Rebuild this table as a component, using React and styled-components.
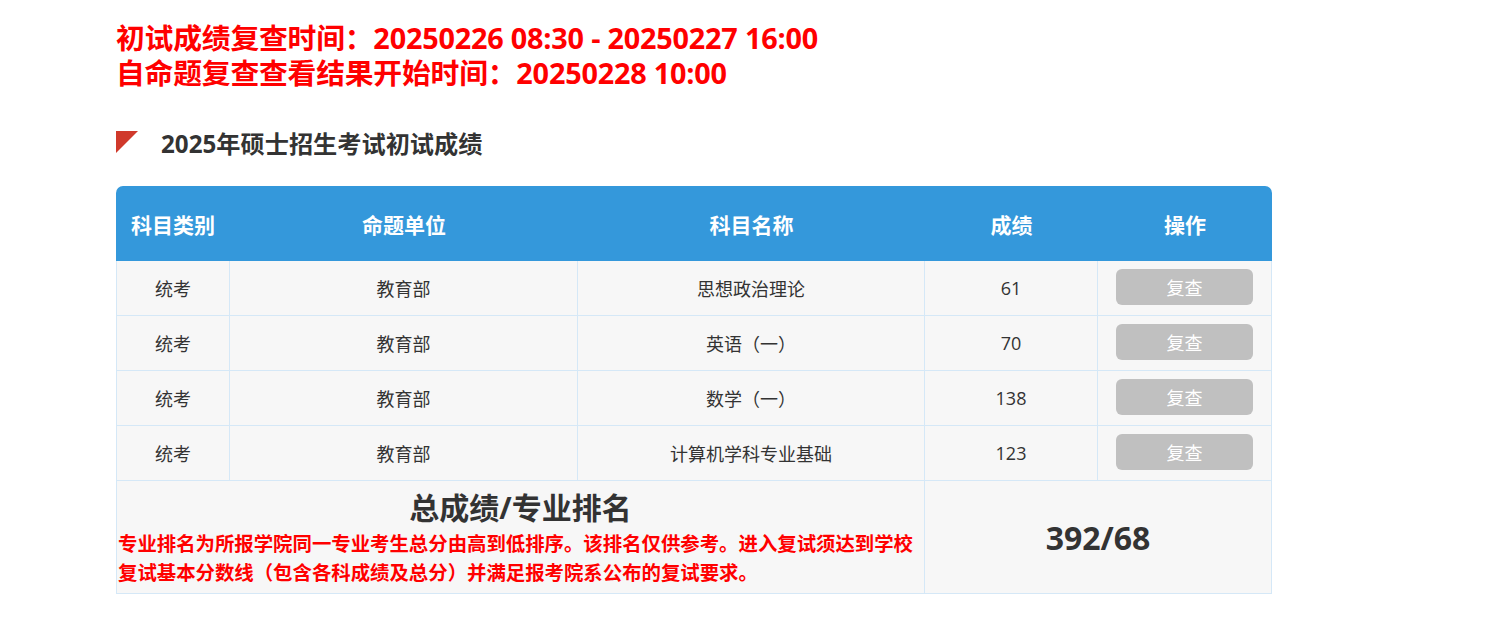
import React from "react";
import styled, { createGlobalStyle } from "styled-components";

const GlobalStyle = createGlobalStyle`
  html, body {
    margin: 0;
    padding: 0;
    background: #fff;
    font-family: "Open Sans", "Noto Sans CJK SC", sans-serif;
  }
`;

const Page = styled.div`
  width: 1156px;
  padding: 20px 0 0 116px;
`;

const Notice = styled.div`
  color: #f00;
  font-size: 28.8px;
  font-weight: 700;
  line-height: 35px;
  letter-spacing: -0.2px;
`;

const SectionTitle = styled.h2`
  display: flex;
  align-items: center;
  gap: 23px;
  margin: 38px 0 0;
  height: 28px;
  font-size: 24.2px;
  font-weight: 700;
  color: #333;
`;

const Flag = styled.span`
  width: 22px;
  height: 22px;
  background: #d0392b;
  clip-path: polygon(0 0, 100% 0, 0 100%);
`;

const Table = styled.table`
  margin-top: 30px;
  width: 1156px;
  border-collapse: separate;
  border-spacing: 0;
  table-layout: fixed;
  font-size: 18px;
  color: #333;
`;

const HeadCell = styled.th`
  height: 75px;
  padding: 0;
  background: #3498db;
  color: #fff;
  font-size: 21px;
  font-weight: 700;
  text-align: center;
  &:first-child { border-top-left-radius: 7px; }
  &:last-child { border-top-right-radius: 7px; }
`;

const Cell = styled.td`
  height: 54px;
  padding: 0;
  background: #f7f7f7;
  text-align: center;
  border-bottom: 1px solid #d5e8f7;
  border-left: ${(p) => (p.$first ? "1px solid #d5e8f7" : "none")};
  border-right: 1px solid #d5e8f7;
`;

const ReviewButton = styled.button`
  width: 137px;
  height: 36px;
  margin-top: -2px;
  border: none;
  border-radius: 6px;
  background: #c0c0c0;
  color: #fff;
  font-family: inherit;
  font-size: 18px;
  cursor: not-allowed;
`;

const SummaryCell = styled(Cell)`
  height: 112px;
  vertical-align: top;
  text-align: left;
`;

const TotalCell = styled(Cell)`
  height: 112px;
  font-size: 32px;
  font-weight: 700;
`;

const SummaryTitle = styled.div`
  margin-top: 6px;
  text-align: center;
  font-size: 30px;
  font-weight: 700;
  line-height: 42px;
`;

const SummaryNote = styled.div`
  padding-left: 1px;
  color: #f00;
  font-size: 19.4px;
  font-weight: 700;
  line-height: 29px;
`;

const rows = [
  { type: "统考", unit: "教育部", name: "思想政治理论", score: 61 },
  { type: "统考", unit: "教育部", name: "英语（一）", score: 70 },
  { type: "统考", unit: "教育部", name: "数学（一）", score: 138 },
  { type: "统考", unit: "教育部", name: "计算机学科专业基础", score: 123 },
];

export default function App() {
  return (
    <Page>
      <GlobalStyle />
      <Notice>
        初试成绩复查时间：20250226 08:30 - 20250227 16:00
        <br />
        自命题复查查看结果开始时间：20250228 10:00
      </Notice>
      <SectionTitle>
        <Flag />
        2025年硕士招生考试初试成绩
      </SectionTitle>
      <Table>
        <colgroup>
          <col style={{ width: 114 }} />
          <col style={{ width: 348 }} />
          <col style={{ width: 347 }} />
          <col style={{ width: 173 }} />
          <col style={{ width: 174 }} />
        </colgroup>
        <thead>
          <tr>
            <HeadCell>科目类别</HeadCell>
            <HeadCell>命题单位</HeadCell>
            <HeadCell>科目名称</HeadCell>
            <HeadCell>成绩</HeadCell>
            <HeadCell>操作</HeadCell>
          </tr>
        </thead>
        <tbody>
          {rows.map((r) => (
            <tr key={r.name}>
              <Cell $first>{r.type}</Cell>
              <Cell>{r.unit}</Cell>
              <Cell>{r.name}</Cell>
              <Cell>{r.score}</Cell>
              <Cell>
                <ReviewButton disabled>复查</ReviewButton>
              </Cell>
            </tr>
          ))}
          <tr>
            <SummaryCell $first colSpan={3}>
              <SummaryTitle>总成绩/专业排名</SummaryTitle>
              <SummaryNote>
                专业排名为所报学院同一专业考生总分由高到低排序。该排名仅供参考。进入复试须达到学校复试基本分数线（包含各科成绩及总分）并满足报考院系公布的复试要求。
              </SummaryNote>
            </SummaryCell>
            <TotalCell colSpan={2}>392/68</TotalCell>
          </tr>
        </tbody>
      </Table>
    </Page>
  );
}
